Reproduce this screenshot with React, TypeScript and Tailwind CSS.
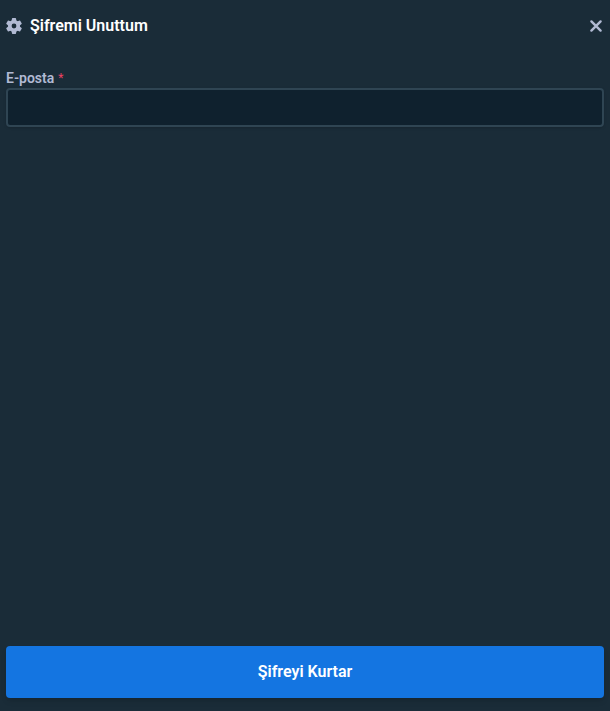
import { useState, type FormEvent } from "react";

export default function App() {
  const [email, setEmail] = useState("");

  const handleSubmit = (e: FormEvent) => {
    e.preventDefault();
  };

  return (
    <div className="flex min-h-screen flex-col bg-[#1a2c38] px-1.5 pb-[13px] font-['Roboto','Liberation_Sans',sans-serif] text-[#b1bad3]">
      <header className="flex h-13 items-center justify-between">
        <div className="flex items-center gap-2">
          <GearIcon />
          <h1 className="text-base leading-6 font-semibold text-white">
            Şifremi Unuttum
          </h1>
        </div>
        <button type="button" aria-label="Kapat" className="cursor-pointer">
          <CloseIcon />
        </button>
      </header>

      <form onSubmit={handleSubmit} className="flex flex-1 flex-col pt-4">
        <label
          htmlFor="email"
          className="flex h-5 items-center gap-1 text-sm leading-5 font-semibold"
        >
          E-posta{" "}
          <span className="text-xs leading-5 font-normal text-[#ed4163]">*</span>
        </label>
        <input
          id="email"
          type="email"
          required
          value={email}
          onChange={(e) => setEmail(e.target.value)}
          className="h-[39px] w-full rounded-sm border-2 border-[#2f4553] bg-[#0f212e] px-2 text-base text-white shadow-sm outline-none hover:border-[#557086]"
        />
        <button
          type="submit"
          className="mt-auto h-13 w-full cursor-pointer rounded-sm bg-[#1475e1] text-base leading-6 font-semibold text-white shadow-md"
        >
          Şifreyi Kurtar
        </button>
      </form>
    </div>
  );
}

function GearIcon() {
  return (
    <svg viewBox="0 0 16 16" className="size-4" aria-hidden>
      <circle
        cx="8"
        cy="8"
        r="4.2"
        fill="none"
        stroke="currentColor"
        strokeWidth="3.6"
      />
      {[0, 60, 120, 180, 240, 300].map((angle) => (
        <path
          key={angle}
          d="M6.5 0h3a.5.5 0 0 1 .5.4l.6 3.4H5.4L6 .4A.5.5 0 0 1 6.5 0Z"
          fill="currentColor"
          transform={`rotate(${angle} 8 8)`}
        />
      ))}
    </svg>
  );
}

function CloseIcon() {
  return (
    <svg
      viewBox="0 0 16 16"
      className="size-4"
      fill="none"
      stroke="currentColor"
      strokeWidth="2.4"
      strokeLinecap="round"
      aria-hidden
    >
      <path d="m3.4 3.4 9.2 9.2M12.6 3.4l-9.2 9.2" />
    </svg>
  );
}
